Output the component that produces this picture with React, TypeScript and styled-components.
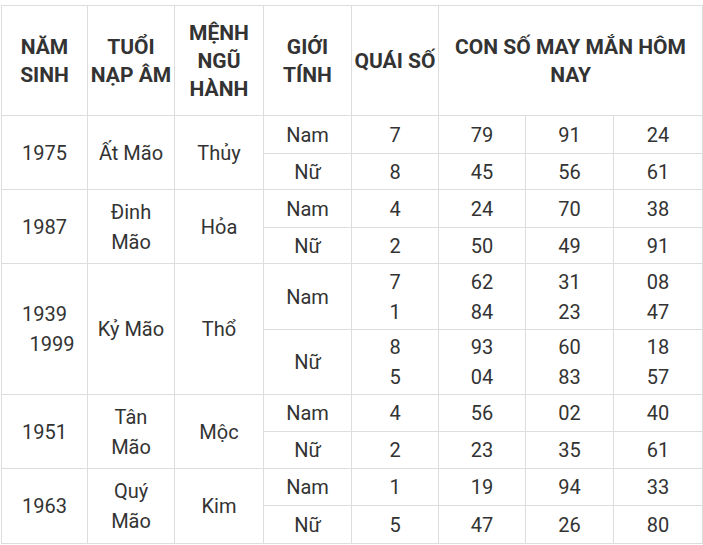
import styled, { createGlobalStyle } from 'styled-components';

const Global = createGlobalStyle`
  body {
    margin: 0;
    background: #fff;
    font-family: Roboto, 'Liberation Sans', sans-serif;
    color: #333;
  }
`;

const Page = styled.div`
  padding: 5px 0 0 1px;
`;

const Table = styled.table`
  width: 702px;
  border-collapse: collapse;
  table-layout: fixed;
  font-size: 20px;
`;

const HeadCell = styled.th`
  border: 1px solid #ddd;
  font-size: 21px;
  font-weight: 700;
  line-height: 28px;
  padding: 0 2px;
  height: 109px;
  text-align: center;
  vertical-align: middle;
`;

const Row = styled.tr<{ $h: number }>`
  height: ${(p) => p.$h}px;
`;

const Cell = styled.td`
  border: 1px solid #ddd;
  line-height: 30px;
  padding: 0 3px;
  text-align: center;
  vertical-align: middle;
`;

type Sub = { sex: string; q: string[]; nums: string[][]; h: number };
type Group = { years: string[]; tuoi: string[]; menh: string; rows: Sub[] };

const DATA: Group[] = [
  {
    years: ['1975'],
    tuoi: ['Ất Mão'],
    menh: 'Thủy',
    rows: [
      { sex: 'Nam', q: ['7'], nums: [['79'], ['91'], ['24']], h: 38 },
      { sex: 'Nữ', q: ['8'], nums: [['45'], ['56'], ['61']], h: 36 },
    ],
  },
  {
    years: ['1987'],
    tuoi: ['Đinh', 'Mão'],
    menh: 'Hỏa',
    rows: [
      { sex: 'Nam', q: ['4'], nums: [['24'], ['70'], ['38']], h: 38 },
      { sex: 'Nữ', q: ['2'], nums: [['50'], ['49'], ['91']], h: 36 },
    ],
  },
  {
    years: ['1939', '\u00a0\u00a0\u00a01999'],
    tuoi: ['Kỷ Mão'],
    menh: 'Thổ',
    rows: [
      { sex: 'Nam', q: ['7', '1'], nums: [['62', '84'], ['31', '23'], ['08', '47']], h: 66 },
      { sex: 'Nữ', q: ['8', '5'], nums: [['93', '04'], ['60', '83'], ['18', '57']], h: 65 },
    ],
  },
  {
    years: ['1951'],
    tuoi: ['Tân', 'Mão'],
    menh: 'Mộc',
    rows: [
      { sex: 'Nam', q: ['4'], nums: [['56'], ['02'], ['40']], h: 37 },
      { sex: 'Nữ', q: ['2'], nums: [['23'], ['35'], ['61']], h: 37 },
    ],
  },
  {
    years: ['1963'],
    tuoi: ['Quý', 'Mão'],
    menh: 'Kim',
    rows: [
      { sex: 'Nam', q: ['1'], nums: [['19'], ['94'], ['33']], h: 37 },
      { sex: 'Nữ', q: ['5'], nums: [['47'], ['26'], ['80']], h: 38 },
    ],
  },
];

const Lines = ({ items }: { items: string[] }) => (
  <>
    {items.map((t, i) => (
      <span key={i}>
        {i > 0 && <br />}
        {t}
      </span>
    ))}
  </>
);

const WIDTHS = [86, 87, 89, 88, 87, 87, 88, 89];

export default function App() {
  return (
    <Page>
      <Global />
      <Table>
        <colgroup>
          {WIDTHS.map((w, i) => (
            <col key={i} style={{ width: w }} />
          ))}
        </colgroup>
        <thead>
          <tr>
            <HeadCell>NĂM<br />SINH</HeadCell>
            <HeadCell>TUỔI<br />NẠP ÂM</HeadCell>
            <HeadCell>MỆNH<br />NGŨ<br />HÀNH</HeadCell>
            <HeadCell>GIỚI<br />TÍNH</HeadCell>
            <HeadCell>QUÁI SỐ</HeadCell>
            <HeadCell colSpan={3}>CON SỐ MAY MẮN HÔM<br />NAY</HeadCell>
          </tr>
        </thead>
        <tbody>
          {DATA.map((g) =>
            g.rows.map((r, ri) => (
              <Row key={g.years[0] + ri} $h={r.h}>
                {ri === 0 && (
                  <>
                    <Cell rowSpan={2}><Lines items={g.years} /></Cell>
                    <Cell rowSpan={2}><Lines items={g.tuoi} /></Cell>
                    <Cell rowSpan={2}>{g.menh}</Cell>
                  </>
                )}
                <Cell>{r.sex}</Cell>
                <Cell><Lines items={r.q} /></Cell>
                {r.nums.map((n, ni) => (
                  <Cell key={ni}><Lines items={n} /></Cell>
                ))}
              </Row>
            ))
          )}
        </tbody>
      </Table>
    </Page>
  );
}
